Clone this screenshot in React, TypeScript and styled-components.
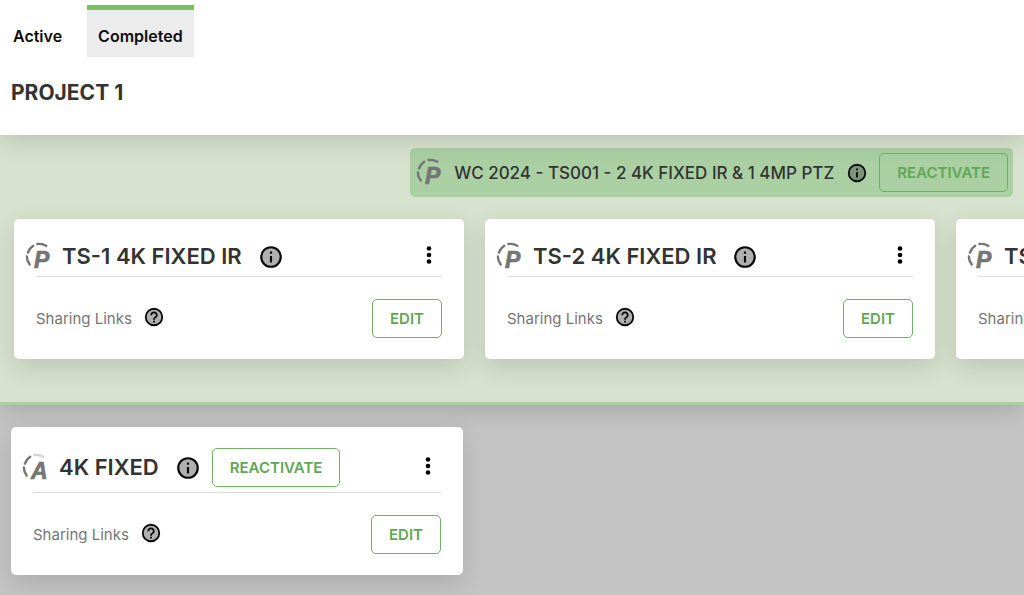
import React from "react";
import styled, { createGlobalStyle } from "styled-components";

const GlobalStyle = createGlobalStyle`
  *, *::before, *::after { box-sizing: border-box; }
  body {
    margin: 0;
    background: #c4c4c4;
    color: #333;
    font-family: Inter, "Liberation Sans", sans-serif;
  }
`;

const Page = styled.div`
  min-height: 100vh;
  overflow: hidden;
`;

const Header = styled.header`
  position: relative;
  z-index: 2;
  padding: 5px 11px 28px 2px;
  background: #fff;
  box-shadow: 0 4px 24px rgba(0, 0, 0, 0.16);
`;

const Tabs = styled.nav`
  display: flex;
  gap: 14px;
`;

const Tab = styled.button<{ $selected?: boolean }>`
  height: 52px;
  padding: 4px 11px 0;
  border: 0;
  border-top: 5px solid ${(p) => (p.$selected ? "#7fc056" : "transparent")};
  background: ${(p) => (p.$selected ? "#ececec" : "transparent")};
  color: #0c0c0c;
  font: 600 16px/20px Inter, sans-serif;
  cursor: pointer;
`;

const ProjectName = styled.h1`
  margin: 22px 0 0 9px;
  font-size: 21px;
  line-height: 28px;
  font-weight: 700;
`;

const Group = styled.section`
  position: relative;
  z-index: 1;
  padding: 13px 0 43px 14px;
  border-bottom: 3px solid #a9d1a4;
  background: #d7e2ce;
  box-shadow: 0 4px 24px rgba(0, 0, 0, 0.16);
`;

const GroupBar = styled.div`
  display: flex;
  align-items: center;
  width: fit-content;
  height: 49px;
  margin: 0 11px 22px auto;
  padding: 0 5px;
  border-radius: 5px;
  background: #aacfa3;
`;

const GroupTitle = styled.h2`
  margin: 0 12px 0 11px;
  font-size: 17px;
  line-height: 24px;
  font-weight: 500;
  white-space: nowrap;
`;

const CardRow = styled.div`
  display: flex;
  gap: 21px;
`;

const CardBox = styled.article`
  flex: 0 0 450px;
  width: 100%;
  max-width: 452px;
  padding-bottom: 21px;
  border-radius: 5px;
  background: #fff;
  box-shadow: 0 8px 24px rgba(0, 0, 0, 0.13);
`;

const CardHead = styled.div<{ $standalone?: boolean }>`
  display: flex;
  align-items: center;
  padding: ${(p) => (p.$standalone ? "21px 22px 5px 10px" : "18px 22px 0 10px")};
`;

const CardTitle = styled.h3`
  margin: 0 16px 0 10px;
  font-size: 22px;
  line-height: 39px;
  font-weight: 600;
  white-space: nowrap;
`;

const Divider = styled.hr`
  height: 1px;
  margin: 0 22px;
  border: 0;
  background: #dedede;
`;

const CardBody = styled.div`
  display: flex;
  align-items: center;
  margin: 22px 22px 0;
`;

const LabelGroup = styled.div`
  display: flex;
  align-items: flex-start;
  gap: 11px;
  color: #757575;
  font-size: 15px;
  line-height: 26px;
`;

const OutlineButton = styled.button`
  height: 39px;
  padding: 0 17px;
  border: 1px solid #6fb163;
  border-radius: 5px;
  background: transparent;
  color: #5fa752;
  font: 600 15px/20px Inter, sans-serif;
  cursor: pointer;
`;

const Push = styled.div`
  display: flex;
  margin-left: auto;
`;

const IconButton = styled.button`
  display: flex;
  padding: 0;
  border: 0;
  background: transparent;
  color: #000;
  cursor: pointer;
`;

const Lower = styled.main`
  padding: 22px 11px 20px;
`;

const Actions = styled.div`
  display: flex;
  margin-left: 11px;
`;

function InfoIcon({ size = 26, fill = "#b0b0b0" }: { size?: number; fill?: string }) {
  return (
    <svg width={size} height={size} viewBox="0 0 24 24" aria-hidden="true">
      <circle cx="12" cy="12" r="9" fill={fill} stroke="#0a0a0a" strokeWidth="2" />
      <path d="M11 7h2v2h-2zM11 11h2v6h-2z" fill="#0a0a0a" />
    </svg>
  );
}

function HelpIcon() {
  return (
    <svg width="22" height="22" viewBox="0 0 24 24" aria-hidden="true">
      <circle cx="12" cy="12" r="9" fill="#b0b0b0" stroke="#0a0a0a" strokeWidth="2" />
      <path
        d="M11 16h2v2h-2zM12 6c-2.21 0-4 1.79-4 4h2c0-1.1.9-2 2-2s2 .9 2 2c0 2-3 1.75-3 5h2c0-2.25 3-2.5 3-5 0-2.21-1.79-4-4-4z"
        fill="#0a0a0a"
      />
    </svg>
  );
}

function MoreIcon() {
  return (
    <svg width="26" height="26" viewBox="0 0 26 26" aria-hidden="true">
      <circle cx="13" cy="4.5" r="2.3" />
      <circle cx="13" cy="11" r="2.3" />
      <circle cx="13" cy="17.5" r="2.3" />
    </svg>
  );
}

function PlanMark({ letter, faded }: { letter: string; faded?: boolean }) {
  return (
    <svg width="28" height="36" viewBox="0 -2 28 36" overflow="visible" aria-hidden="true">
      <g fill="none" stroke="#757575" strokeWidth="2.4" strokeLinecap="round">
        <path d="M5.7 23.6A13 13 0 0 1 2.9 15.4" />
        <path d="M3.9 11.6A13 13 0 0 1 9.2 4.8" />
        <path d="M13.4 3A13 13 0 0 1 22.3 4.8" stroke={faded ? "#d4d4d4" : "#757575"} />
      </g>
      <text
        x="10"
        y="27"
        fill="#757575"
        stroke="#757575"
        strokeWidth="0.7"
        fontFamily="Liberation Sans, sans-serif"
        fontSize="23"
        fontWeight="700"
        fontStyle="italic"
      >
        {letter}
      </text>
    </svg>
  );
}

type CardProps = { title: string; letter: string; standalone?: boolean };

function Card({ title, letter, standalone }: CardProps) {
  return (
    <CardBox>
      <CardHead $standalone={standalone}>
        <PlanMark letter={letter} faded={standalone} />
        <CardTitle>{title}</CardTitle>
        <IconButton aria-label={`About ${title}`}>
          <InfoIcon />
        </IconButton>
        {standalone && (
          <Actions>
            <OutlineButton>REACTIVATE</OutlineButton>
          </Actions>
        )}
        <Push>
          <IconButton aria-label={`More options for ${title}`}>
            <MoreIcon />
          </IconButton>
        </Push>
      </CardHead>
      <Divider />
      <CardBody>
        <LabelGroup>
          <span>Sharing Links</span>
          <IconButton aria-label="Help with sharing links">
            <HelpIcon />
          </IconButton>
        </LabelGroup>
        <Push>
          <OutlineButton>EDIT</OutlineButton>
        </Push>
      </CardBody>
    </CardBox>
  );
}

export default function App() {
  return (
    <Page>
      <GlobalStyle />
      <Header>
        <Tabs>
          <Tab>Active</Tab>
          <Tab $selected>Completed</Tab>
        </Tabs>
        <ProjectName>PROJECT 1</ProjectName>
      </Header>
      <Group>
        <GroupBar>
          <PlanMark letter="P" />
          <GroupTitle>WC 2024 - TS001 - 2 4K FIXED IR &amp; 1 4MP PTZ</GroupTitle>
          <IconButton aria-label="About this group">
            <InfoIcon size={22} fill="#7a9675" />
          </IconButton>
          <Actions>
            <OutlineButton>REACTIVATE</OutlineButton>
          </Actions>
        </GroupBar>
        <CardRow>
          <Card letter="P" title="TS-1 4K FIXED IR" />
          <Card letter="P" title="TS-2 4K FIXED IR" />
          <Card letter="P" title="TS-3 4K FIXED IR" />
        </CardRow>
      </Group>
      <Lower>
        <Card letter="A" title="4K FIXED" standalone />
      </Lower>
    </Page>
  );
}
